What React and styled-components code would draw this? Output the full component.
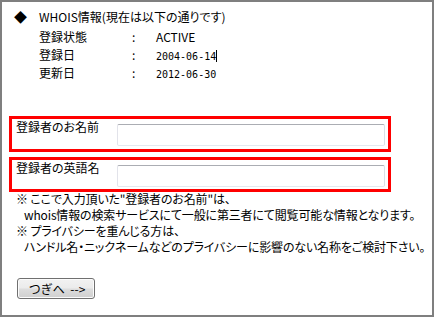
import React from 'react';
import styled, { createGlobalStyle } from 'styled-components';

const GlobalStyle = createGlobalStyle`
  html, body {
    margin: 0;
    padding: 0;
    background: #fff;
  }
  body {
    font-family: "Noto Sans CJK JP", "Noto Sans", sans-serif;
    font-size: 12px;
    color: #000;
  }
`;

const Frame = styled.div`
  box-sizing: border-box;
  width: 434px;
  height: 317px;
  border: 2px solid #7f7f7f;
  background: #fff;
  padding-top: 6px;
  display: flex;
  flex-direction: column;
  font-feature-settings: "palt";
`;

const Heading = styled.div`
  display: flex;
  align-items: center;
  height: 18px;
  line-height: 18px;
  padding-left: 12px;
  margin-bottom: 2px;
`;

const Marker = styled.span`
  width: 25px;
  font-size: 13px;
`;

const InfoGrid = styled.div`
  display: grid;
  grid-template-columns: 93px 24px auto;
  grid-auto-rows: 18px;
  line-height: 18px;
  padding-left: 37px;
`;

const Mono = styled.span`
  font-family: "DejaVu Sans Mono", "Liberation Mono", monospace;
  font-size: 10px;
`;

const Caret = styled.span`
  display: inline-block;
  width: 1px;
  height: 12px;
  background: #000;
  vertical-align: -2px;
`;

const FieldBox = styled.div`
  box-sizing: border-box;
  width: 382px;
  height: ${p => p.$h}px;
  margin-left: 7px;
  margin-top: ${p => p.$top}px;
  border: 3px solid #ff0000;
  display: flex;
  align-items: flex-start;
  padding-left: 4px;
`;

const FieldLabel = styled.div`
  width: 101px;
  line-height: 16px;
`;

const TextInput = styled.input`
  box-sizing: border-box;
  width: 268px;
  height: 22px;
  margin: 5px 0 0 0;
  border: 1px solid;
  border-color: #abadb3 #dbdfe6 #e3e9ef #e2e3ea;
  border-radius: 2px;
  background: #fff;
  outline: none;
`;

const Notes = styled.div`
  margin-top: -1px;
  padding-left: 14px;
  line-height: 16px;
  letter-spacing: -0.15px;
`;

const NoteLine = styled.div`
  padding-left: ${p => (p.$indent ? 8 : 0)}px;
  white-space: nowrap;
`;

const NextButton = styled.button`
  box-sizing: border-box;
  width: 78px;
  height: 21px;
  margin: 23px 0 0 15px;
  padding: 0 0 0 2px;
  border: 1px solid #707070;
  border-radius: 3px;
  background: linear-gradient(#f2f2f2 0%, #ebebeb 48%, #dddddd 52%, #cfcfcf 100%);
  box-shadow: inset 0 0 0 1px #fcfcfc;
  font-family: inherit;
  font-size: 12px;
  line-height: 18px;
  color: #000;
  text-align: center;
  word-spacing: 3px;
`;

export default function App() {
  return (
    <>
      <GlobalStyle />
      <Frame>
        <Heading>
          <Marker>◆</Marker>
          <span>WHOIS情報(現在は以下の通りです)</span>
        </Heading>
        <InfoGrid>
          <span>登録状態</span>
          <span>:</span>
          <span>ACTIVE</span>
          <span>登録日</span>
          <span>:</span>
          <span><Mono>2004-06-14</Mono><Caret /></span>
          <span>更新日</span>
          <span>:</span>
          <span><Mono>2012-06-30</Mono></span>
        </InfoGrid>

        <FieldBox $top={34} $h={36}>
          <FieldLabel>登録者のお名前</FieldLabel>
          <TextInput type="text" />
        </FieldBox>
        <FieldBox $top={5} $h={35}>
          <FieldLabel>登録者の英語名</FieldLabel>
          <TextInput type="text" />
        </FieldBox>

        <Notes>
          <NoteLine>※ ここで入力頂いた"登録者のお名前"は、</NoteLine>
          <NoteLine $indent>whois情報の検索サービスにて一般に第三者にて閲覧可能な情報となります。</NoteLine>
          <NoteLine>※ プライバシーを重んじる方は、</NoteLine>
          <NoteLine $indent>ハンドル名・ニックネームなどのプライバシーに影響のない名称をご検討下さい。</NoteLine>
        </Notes>

        <div>
          <NextButton type="button">つぎへ --&gt;</NextButton>
        </div>
      </Frame>
    </>
  );
}
